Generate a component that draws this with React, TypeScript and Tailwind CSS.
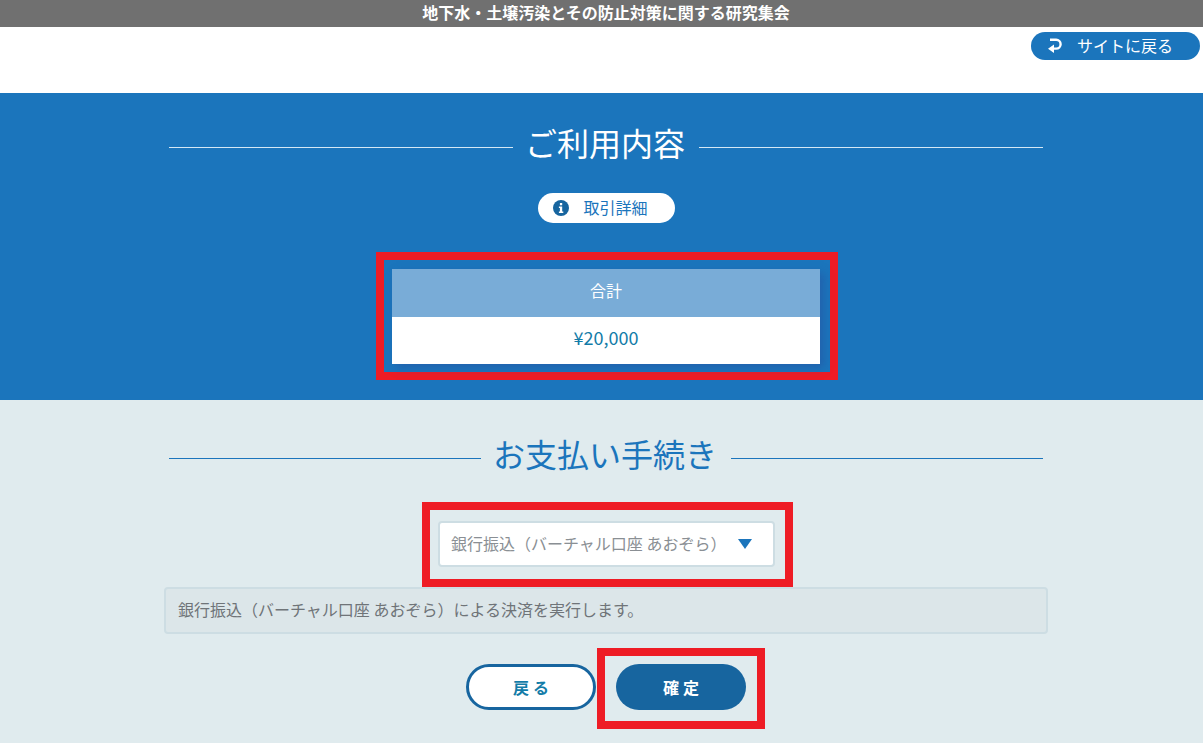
const font = "font-['Noto_Sans_CJK_JP','Noto_Sans',sans-serif]";

const SectionTitle = ({ text, color, line }: { text: string; color: string; line: string }) => (
  <div className="mx-[5px] flex items-center gap-[13px]">
    <div className={`h-px flex-1 ${line}`} />
    <h2 className={`-ml-px mr-px pb-[10px] text-[32px] font-normal leading-[46px] ${color}`}>{text}</h2>
    <div className={`h-px flex-1 ${line}`} />
  </div>
);

const App = () => {
  return (
    <div className={`flex h-[743px] w-[1203px] flex-col overflow-hidden bg-white ${font}`}>
      <div className="flex h-[27px] items-center justify-center bg-[#707070] pb-[3px] pl-[9px] text-[16px] font-bold text-white">
        地下水・土壌汚染とその防止対策に関する研究集会
      </div>

      <div className="flex h-[66px] items-start justify-end pr-[3px] pt-[5px]">
        <button className="flex h-[28px] w-[169px] items-center rounded-full bg-[#1b75bc] pb-[3px] pl-[16px] text-[16px] text-white">
          <svg viewBox="0 0 16 16" className="mt-[3px] h-[16px] w-[16px]" fill="none" stroke="currentColor" strokeWidth="2.4">
            <path d="M3 1.8h6.2a4.4 4.4 0 0 1 0 8.8H4" />
            <path d="M7 6.4 1 10.8l6 4.2z" fill="currentColor" stroke="none" />
          </svg>
          <span className="ml-[14px]">サイトに戻る</span>
        </button>
      </div>

      <section className="h-[307px] bg-[#1b75bc] pt-[26px]">
        <div className="ml-[164px] w-[884px]">
          <SectionTitle text="ご利用内容" color="text-white" line="bg-[#d5e8f5]" />
          <div className="mt-[18px] flex justify-center">
            <button className="flex h-[30px] w-[137px] items-center rounded-full bg-white pl-[15px] text-[16px] text-[#1b75bc]">
              <svg viewBox="0 0 16 16" className="h-[16px] w-[16px]">
                <circle cx="8" cy="8" r="8" fill="#17659f" />
                <rect x="6.9" y="3" width="2.3" height="2.3" fill="#fff" />
                <path d="M5.9 6.6h3.3v5h1.1v1.5H5.9v-1.5h1v-3.5h-1z" fill="#fff" />
              </svg>
              <span className="ml-[15px] pb-[3px]">取引詳細</span>
            </button>
          </div>
          <div className="ml-[212px] mt-[29px] w-fit border-[8px] border-[#ee1c25] pb-[8px] pl-[8px] pr-[10px] pt-[9px]">
            <div className="w-[428px] shadow-[4px_4px_8px_rgba(40,80,160,0.5)]">
              <div className="flex h-[48px] items-center justify-center bg-[#79acd7] pb-[6px] text-[16px] text-white">合計</div>
              <div className="flex h-[47px] items-center justify-center bg-white pb-[7px] text-[18px] text-[#137ca8]">¥20,000</div>
            </div>
          </div>
        </div>
      </section>

      <section className="flex-1 bg-[#e0ebee] pt-[30px]">
        <div className="ml-[164px] w-[884px]">
          <SectionTitle text="お支払い手続き" color="text-[#1b75bc]" line="bg-[#1b75bc]" />
          <div className="ml-[258px] mt-[16px] w-fit border-[8px] border-[#ee1c25] pb-[12px] pl-[8px] pr-[10px] pt-[11px]">
            <div className="flex h-[46px] w-[337px] items-center rounded-[4px] border-2 border-[#cddde3] bg-white pl-[11px] text-[16px] text-[#8a8f94]">
              <span className="pb-[3px]">銀行振込（バーチャル口座 あおぞら）</span>
              <svg viewBox="0 0 14 10" className="ml-[12px] h-[10px] w-[14px]">
                <path d="M0 0h14L7 10z" fill="#1b75bc" />
              </svg>
            </div>
          </div>
          <div className="flex h-[47px] items-center rounded-[4px] border-2 border-[#cddde3] bg-[#dce6e9] pb-[3px] pl-[12px] text-[16px] text-[#6f7478]">
            銀行振込（バーチャル口座 あおぞら）による決済を実行します。
          </div>
          <div className="mt-[14px] flex items-start">
            <button className="ml-[302px] mt-[16px] h-[46px] w-[130px] rounded-full border-[3px] border-[#17659f] bg-white pb-[1px] pl-[4px] text-[16px] font-bold tracking-[0.25em] text-[#137ca8]">
              戻る
            </button>
            <div className="ml-[1px] border-[8px] border-[#ee1c25] pb-[11px] pl-[11px] pr-[11px] pt-[8px]">
              <button className="block h-[46px] w-[130px] rounded-full bg-[#17659f] pb-[1px] pl-[4px] text-[16px] font-bold tracking-[0.25em] text-white">
                確定
              </button>
            </div>
          </div>
        </div>
      </section>
    </div>
  );
};

export default App;
